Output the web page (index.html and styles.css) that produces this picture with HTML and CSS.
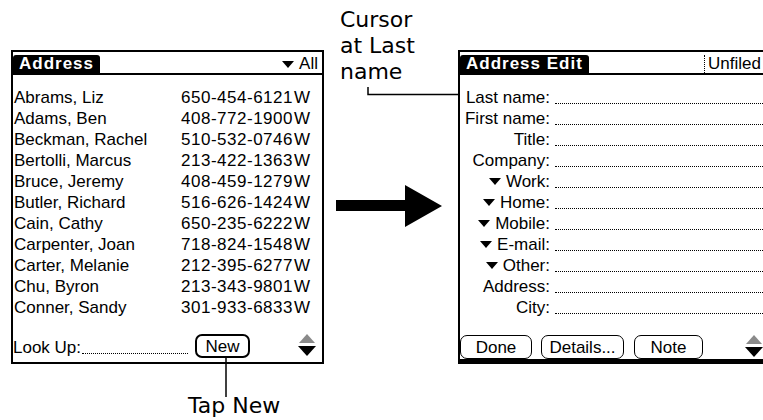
FILE: index.html
```html
<!DOCTYPE html>
<html lang="en">
<head>
    <meta charset="UTF-8">
    <meta name="viewport" content="width=device-width, initial-scale=1.0">
    <title>Address Edit</title>
    <link rel="stylesheet" href="styles.css">
</head>
<body>
    <div class="figure">
        <div class="screen list-screen">
            <div class="titlebar">
                <span class="tab">Address</span>
                <span class="category"><span class="dropdown"></span>All</span>
            </div>
            <ul class="records">
                <li><span class="name">Abrams, Liz</span><span class="phone">650-454-6121</span><span class="kind">W</span></li>
                <li><span class="name">Adams, Ben</span><span class="phone">408-772-1900</span><span class="kind">W</span></li>
                <li><span class="name">Beckman, Rachel</span><span class="phone">510-532-0746</span><span class="kind">W</span></li>
                <li><span class="name">Bertolli, Marcus</span><span class="phone">213-422-1363</span><span class="kind">W</span></li>
                <li><span class="name">Bruce, Jeremy</span><span class="phone">408-459-1279</span><span class="kind">W</span></li>
                <li><span class="name">Butler, Richard</span><span class="phone">516-626-1424</span><span class="kind">W</span></li>
                <li><span class="name">Cain, Cathy</span><span class="phone">650-235-6222</span><span class="kind">W</span></li>
                <li><span class="name">Carpenter, Joan</span><span class="phone">718-824-1548</span><span class="kind">W</span></li>
                <li><span class="name">Carter, Melanie</span><span class="phone">212-395-6277</span><span class="kind">W</span></li>
                <li><span class="name">Chu, Byron</span><span class="phone">213-343-9801</span><span class="kind">W</span></li>
                <li><span class="name">Conner, Sandy</span><span class="phone">301-933-6833</span><span class="kind">W</span></li>
            </ul>
            <div class="footer">
                <span class="lookup">Look Up:</span>
                <span class="lookup-line"></span>
                <span class="btn btn-new">New</span>
                <svg class="scroll" width="18" height="24" viewBox="0 0 18 24">
                    <polygon points="9,1 17,10 1,10" fill="#8a8a8a"/>
                    <polygon points="0,13 18,13 9,23" fill="#000"/>
                </svg>
            </div>
        </div>

        <div class="pointer">
            <svg width="134" height="314" viewBox="0 0 134 314">
                <polygon points="12,150 81,150 81,135 118,156 81,177 81,161 12,161" fill="#000"/>
            </svg>
        </div>

        <div class="screen edit-screen">
            <div class="titlebar">
                <span class="tab">Address Edit</span>
                <span class="category unfiled">Unfiled</span>
            </div>
            <ul class="fields">
                <li><span class="label">Last name:</span><span class="field"></span></li>
                <li><span class="label">First name:</span><span class="field"></span></li>
                <li><span class="label">Title:</span><span class="field"></span></li>
                <li><span class="label">Company:</span><span class="field"></span></li>
                <li><span class="label"><span class="dropdown"></span>Work:</span><span class="field"></span></li>
                <li><span class="label"><span class="dropdown"></span>Home:</span><span class="field"></span></li>
                <li><span class="label"><span class="dropdown"></span>Mobile:</span><span class="field"></span></li>
                <li><span class="label"><span class="dropdown"></span>E-mail:</span><span class="field"></span></li>
                <li><span class="label"><span class="dropdown"></span>Other:</span><span class="field"></span></li>
                <li><span class="label">Address:</span><span class="field"></span></li>
                <li><span class="label">City:</span><span class="field"></span></li>
            </ul>
            <div class="footer edit-footer">
                <span class="btn btn-done">Done</span>
                <span class="btn btn-details">Details...</span>
                <span class="btn btn-note">Note</span>
                <svg class="scroll" width="18" height="24" viewBox="0 0 18 24">
                    <polygon points="9,1 17,10 1,10" fill="#8a8a8a"/>
                    <polygon points="0,13 18,13 9,23" fill="#000"/>
                </svg>
            </div>
        </div>

        <div class="note note-cursor">Cursor<br>at Last<br>name</div>
        <div class="note note-tap">Tap New</div>

        <svg class="leaders" width="763" height="420" viewBox="0 0 763 420">
            <polyline points="368,87 368,94.5 460,94.5" fill="none" stroke="#000" stroke-width="1.5"/>
            <line x1="226" y1="358" x2="226" y2="397" stroke="#000" stroke-width="1.5"/>
        </svg>
    </div>
</body>
</html>
```

FILE: styles.css
```css
body {
    margin: 0;
    background-color: #fff;
}

.figure {
    position: relative;
    width: 763px;
    height: 420px;
    overflow: hidden;
    display: flex;
    align-items: flex-start;
    padding: 50px 0 0 11px;
    box-sizing: border-box;
    font-family: "Liberation Sans", Arial, sans-serif;
    color: #000;
}

/* palm screens */
.screen {
    flex: none;
    width: 313px;
    height: 314px;
    box-sizing: border-box;
    border: 2px solid #000;
    display: flex;
    flex-direction: column;
    font-size: 17px;
    background-color: #fff;
}

.edit-screen {
    border-bottom-width: 5px;
}

.titlebar {
    display: flex;
    align-items: stretch;
    height: 20px;
    margin-top: 3px;
    border-bottom: 2px solid #000;
    box-sizing: border-box;
}

.tab {
    background-color: #000;
    color: #fff;
    font-size: 17px;
    font-weight: bold;
    letter-spacing: 1px;
    line-height: 18px;
    padding: 0 6px;
    border-radius: 3px 3px 0 0;
}

.category {
    margin-left: auto;
    display: flex;
    align-items: center;
    gap: 5px;
    padding-right: 4px;
    line-height: 18px;
}

.unfiled {
    padding: 0 8px 0 3px;
    border-left: 1px dotted #000;
}

.dropdown {
    display: inline-block;
    width: 0;
    height: 0;
    border-left: 6px solid transparent;
    border-right: 6px solid transparent;
    border-top: 7px solid #000;
}

.records, .fields {
    list-style: none;
    margin: 0;
    padding: 12px 0 0 0;
}

.records {
    padding-left: 1px;
    padding-right: 12px;
}

.records li, .fields li {
    display: flex;
    height: 21px;
    line-height: 21px;
}

.name {
    flex: 1;
}

.phone {
    letter-spacing: 0.5px;
}

.kind {
    margin-left: 1px;
}

.label {
    flex: none;
    width: 90px;
    display: flex;
    justify-content: flex-end;
    align-items: center;
    gap: 5px;
    white-space: nowrap;
}

.field {
    flex: 1;
    height: 16px;
    margin-left: 5px;
    border-bottom: 1px dotted #000;
}

.footer {
    margin-top: auto;
    display: flex;
    align-items: flex-end;
    height: 30px;
    padding-bottom: 4px;
    box-sizing: border-box;
    line-height: 21px;
}

.lookup-line {
    width: 106px;
    height: 1px;
    margin: 0 0 4px 1px;
    border-bottom: 1px dotted #000;
}

.btn {
    display: flex;
    align-items: center;
    justify-content: center;
    height: 24px;
    box-sizing: border-box;
    border: 1px solid #000;
    border-radius: 7px;
}

.btn-new {
    width: 55px;
    margin-left: 7px;
    border-width: 2px;
}

.edit-footer {
    padding-bottom: 0;
}

.btn-done {
    width: 72px;
}

.btn-details {
    width: 83px;
    margin-left: 9px;
}

.btn-note {
    width: 69px;
    margin-left: 10px;
}

.scroll {
    margin-left: auto;
    margin-right: 6px;
    margin-bottom: 1px;
}

.pointer {
    flex: none;
    width: 134px;
    height: 314px;
}

/* callouts */
.note {
    position: absolute;
    font-family: "DejaVu Sans", sans-serif;
    font-size: 22px;
    line-height: 26px;
}

.note-cursor {
    left: 340px;
    top: 7px;
}

.note-tap {
    left: 188px;
    top: 393px;
}

.leaders {
    position: absolute;
    left: 0;
    top: 0;
    pointer-events: none;
}
```
